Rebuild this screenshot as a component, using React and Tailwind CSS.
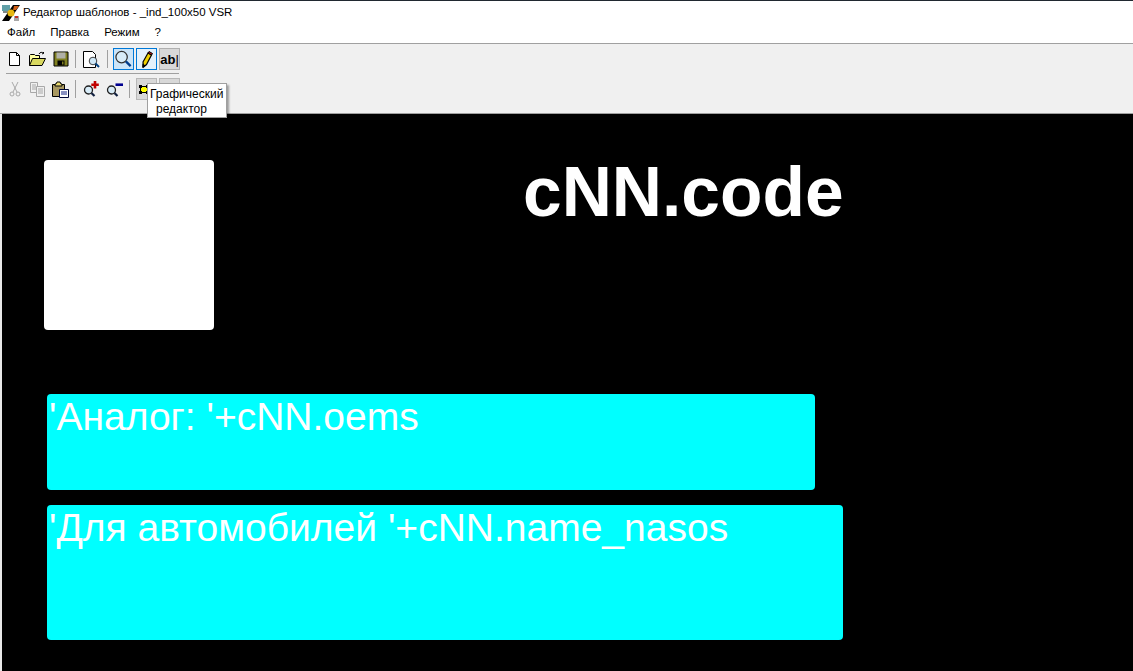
const Sep = ({ cls }) => <div className={`w-[1px] h-[18px] bg-[#a0a0a0] self-center shrink-0 ${cls}`} />;

const Btn = ({ children, w = "w-[23px]", cls = "" }) => (
  <div className={`${w} h-[22px] flex items-center justify-center shrink-0 ${cls}`}>{children}</div>
);

const NewIcon = () => (
  <svg width="16" height="16" viewBox="0 0 16 16"><path d="M2.500 1.500h7l3 3v10h-10z" fill="#fff" stroke="#000" /><path d="M9.500 1.500v3h3" fill="none" stroke="#000" /></svg>
);
const OpenIcon = () => (
  <svg width="18" height="16" viewBox="0 0 18 16"><path d="M.5 14.500v-10l1-1h4l1 1h4v3" fill="#ffffa0" stroke="#000" /><path d="M.5 14.500l3-7h13l-3.500 7z" fill="#d8d860" stroke="#000" /><path d="M10 3c1-2 3-2 5-1l-1-1m1 1l-2 1" fill="none" stroke="#000" /></svg>
);
const SaveIcon = () => (
  <svg width="16" height="16" viewBox="0 0 16 16"><path d="M1 1h14v14H1z" fill="#808020" stroke="#000" /><path d="M3.500 1.500h9v6h-9z" fill="#b0b0a8" /><path d="M4.500 9.500h7v5h-7z" fill="#000" /><path d="M9 10.500h1.500v3H9z" fill="#808020" /></svg>
);
const PreviewIcon = () => (
  <svg width="18" height="19" viewBox="0 0 18 19"><path d="M1.500 1.500h9l3 3v13h-12z" fill="#fff" stroke="#000" /><circle cx="11" cy="11" r="3.800" fill="#cfe8f8" stroke="#404040" /><path d="M13.500 13.500l3.500 3.500" stroke="#004080" strokeWidth="2" /></svg>
);
const ZoomIcon = () => (
  <svg width="20" height="20" viewBox="0 0 20 20"><circle cx="8" cy="8" r="6" fill="#d8ecf8" stroke="#303030" strokeWidth="1.300" /><path d="M12.500 12.500l5 5" stroke="#003c8c" strokeWidth="2.400" /></svg>
);
const PencilIcon = () => (
  <svg width="14" height="19" viewBox="0 0 14 19"><path d="M3 12L8 3l3.500 2-5 9.500-3 2.500z" fill="#f0d000" stroke="#000" strokeWidth="1.200" /><path d="M8 3l1-1.500 3.500 2-1 1.500z" fill="#c01818" stroke="#000" /><path d="M2.500 13.500L2 18l3.500-2.500z" fill="#000" /></svg>
);
const CutIcon = () => (
  <svg width="12" height="16" viewBox="0 0 12 16" fill="none" stroke="#a8a8a8"><path d="M3 1l5 10M9 1L4 11" /><circle cx="3" cy="13" r="2" /><circle cx="9" cy="13" r="2" /></svg>
);
const CopyIcon = () => (
  <svg width="16" height="15" viewBox="0 0 16 15" fill="#f0f0f0" stroke="#a8a8a8"><path d="M.5.500h7v10h-7z" /><path d="M2 3h4M2 5h4M2 7h4" /><path d="M6.500 4.500h8v10h-8z" /><path d="M8 7h5M8 9h5M8 11h5" /></svg>
);
const PasteIcon = () => (
  <svg width="17" height="17" viewBox="0 0 17 17"><path d="M.5 3.500h12v12H.5z" fill="#a89860" stroke="#000" /><path d="M4 3l1-2h3l1 2h1v2H3V3z" fill="#e8d870" stroke="#000" /><path d="M7.500 8.500h9v8h-9z" fill="#fff" stroke="#000838" /><path d="M9 11h6M9 13h6" stroke="#102080" /></svg>
);
const ZoomPlus = () => (
  <svg width="17" height="18" viewBox="0 0 17 18"><circle cx="5.500" cy="10" r="4" fill="#d8ecf8" stroke="#202020" strokeWidth="1.300" /><path d="M8.500 13l3 3" stroke="#102040" strokeWidth="2.200" /><path d="M12 1v7.500M8.300 4.700h7.500" stroke="#c00000" strokeWidth="2.600" /></svg>
);
const ZoomMinus = () => (
  <svg width="17" height="18" viewBox="0 0 17 18"><circle cx="5.500" cy="10" r="4" fill="#d8ecf8" stroke="#202020" strokeWidth="1.300" /><path d="M8.500 13l3 3" stroke="#102040" strokeWidth="2.200" /><path d="M9.500 4.700h7.500" stroke="#000090" strokeWidth="2.600" /></svg>
);
const ShapeIcon = () => (
  <svg width="10" height="11" viewBox="0 0 10 11"><path d="M1.500 2.500h7v6h-7z" fill="#ffff00" stroke="#000" /><path d="M0 1h3v3H0zM7 1h3v3H7zM0 7h3v3H0zM7 7h3v3H7z" fill="#000" /></svg>
);

const AppLogo = () => (
  <svg width="18" height="17" viewBox="0 0 18 17">
    <path d="M0 0h8v6H0z" fill="#60a0a8" />
    <path d="M1 6h7v2H1z" fill="#808888" />
    <path d="M11 0h7L7 16H0z" fill="#000" />
    <path d="M12 1h5l-3 4h-3z" fill="#d06018" />
    <circle cx="9" cy="8" r="3.500" fill="#e8b810" />
    <path d="M12 11h5v5h-5z" fill="#a8a8a8" />
    <path d="M13 11h3v2h-3z" fill="#c03028" />
  </svg>
);

export default function App() {
  return (
    <div
      className="w-[1133px] h-[671px] flex flex-col overflow-hidden bg-white text-black relative"
      style={{ fontFamily: '"Liberation Sans", sans-serif' }}
    >
      <div className="h-[22px] shrink-0 flex items-center pl-[2px] pt-[3px] border-t border-[#202830] text-[11.500px] leading-none">
        <AppLogo />
        <span className="ml-[3px]">Редактор шаблонов - _ind_100x50 VSR</span>
      </div>
      <div className="h-[22px] shrink-0 flex items-center pl-[7px] gap-[15px] text-[11.500px] leading-none border-b border-[#a0a0a0]">
        <span>Файл</span>
        <span>Правка</span>
        <span>Режим</span>
        <span>?</span>
      </div>
      <div className="h-[70px] shrink-0 bg-[#f0f0f0] flex flex-col pl-[3px] border-b border-[#a0a0a0]">
        <div className="h-[22px] mt-[4px] flex items-center">
          <Btn><NewIcon /></Btn>
          <Btn><OpenIcon /></Btn>
          <Btn><SaveIcon /></Btn>
          <Sep cls="ml-[3px] mr-[3px]" />
          <Btn w="w-[24px]"><PreviewIcon /></Btn>
          <Sep cls="ml-[4px] mr-[5px]" />
          <Btn w="w-[21px]" cls="border border-[#0078d7] bg-[#cce4f7] mr-[2px]"><ZoomIcon /></Btn>
          <Btn w="w-[21px]" cls="border border-[#0078d7] bg-[#e5f1fb] mr-[2px]"><PencilIcon /></Btn>
          <Btn w="w-[21px]" cls="border border-[#b0b0b0] bg-[#d8d8d8]">
            <span className="text-[13px] leading-none"><b>ab</b>|</span>
          </Btn>
        </div>
        <div className="h-[1px] w-[173px] ml-[3px] mt-[3px] bg-[#a0a0a0]" />
        <div className="h-[22px] mt-[4px] flex items-center">
          <Btn><CutIcon /></Btn>
          <Btn><CopyIcon /></Btn>
          <Btn><PasteIcon /></Btn>
          <Sep cls="ml-[3px] mr-[3px]" />
          <Btn w="w-[24px]"><ZoomPlus /></Btn>
          <Btn w="w-[23px]"><ZoomMinus /></Btn>
          <Sep cls="ml-[3px] mr-[6px]" />
          <Btn w="w-[21px]" cls="border border-[#b8b8b8] bg-[#d8d8d8] mr-[2px] justify-start pl-[2px]">
            <ShapeIcon />
          </Btn>
          <Btn w="w-[21px]" cls="border border-[#b8b8b8] bg-[#d8d8d8]" />
        </div>
      </div>
      <div className="flex-1 bg-black relative border-l-2 border-[#e8e8e8]">
        <div className="absolute left-[42px] top-[46px] w-[170px] h-[170px] bg-white rounded-[4px]" />
        <div className="absolute left-[521px] top-[38px] text-[69.500px] font-bold leading-[80px] text-white whitespace-nowrap">
          cNN.code
        </div>
        <div className="absolute left-[45px] top-[280px] w-[768px] h-[96px] bg-[#00ffff] rounded-[4px] pl-[2px] text-white text-[39px] leading-[46px] whitespace-nowrap">
          'Аналог: '+cNN.oems
        </div>
        <div className="absolute left-[45px] top-[391px] w-[796px] h-[135px] bg-[#00ffff] rounded-[4px] pl-[2px] text-white text-[39px] leading-[46px] whitespace-nowrap">
          'Для автомобилей '+cNN.name_nasos
        </div>
      </div>
      <div className="absolute left-[147px] top-[83px] w-[80px] h-[35px] bg-white border border-[#a0a0a0] shadow-[2px_2px_2px_rgba(0,0,0,0.35)] text-[12px] leading-[15px] text-black pl-[2px] pt-[3px]">
        <div>Графический</div>
        <div className="pl-[6px]">редактор</div>
      </div>
    </div>
  );
}
